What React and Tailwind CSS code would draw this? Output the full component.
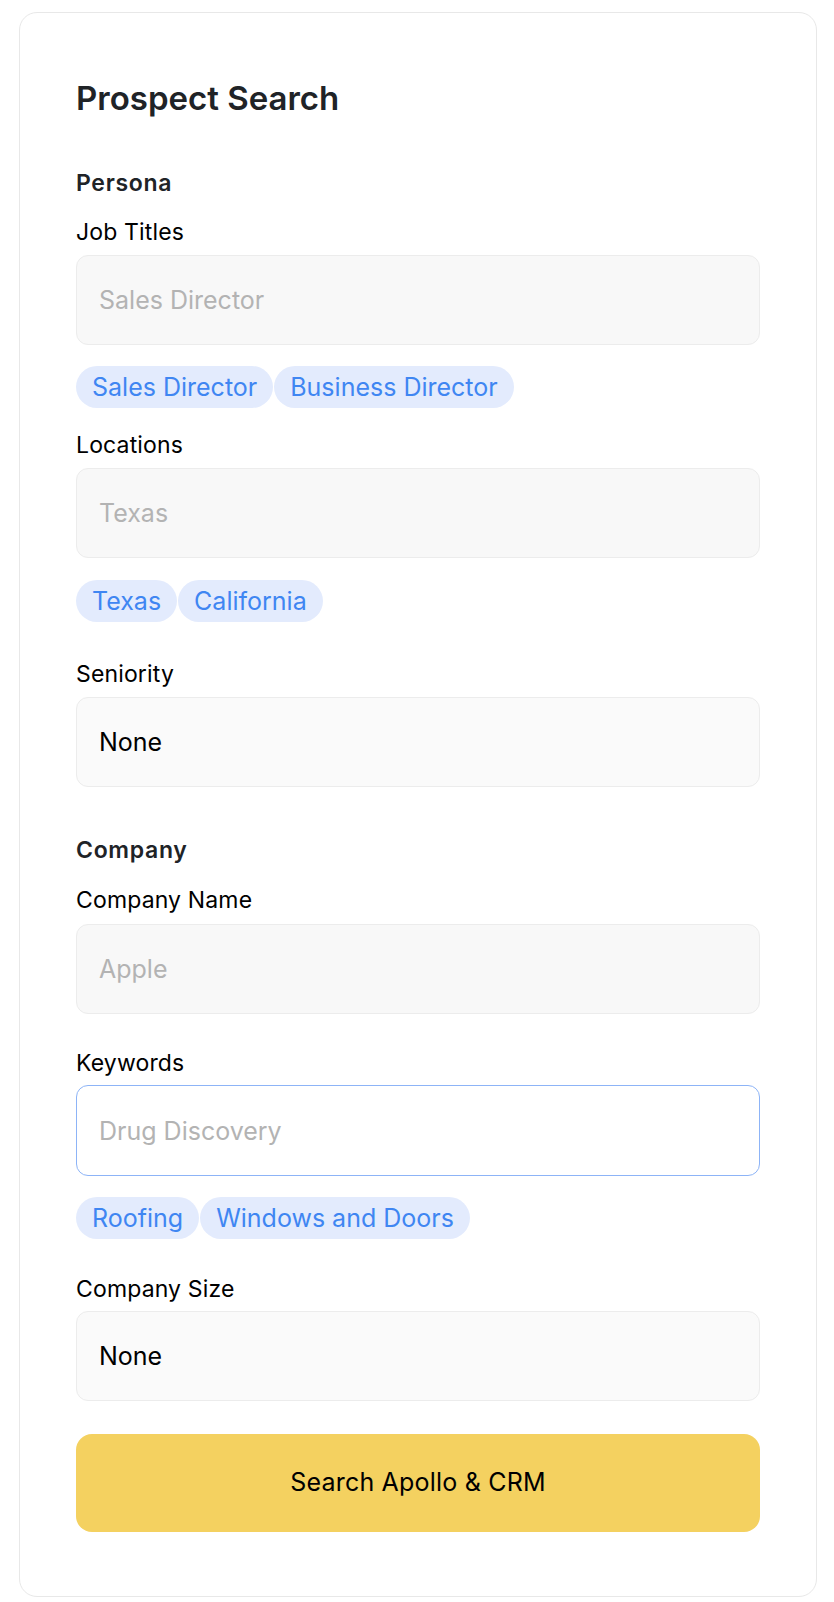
import { useState } from "react";

const font = { fontFamily: "Inter, 'Noto Sans', sans-serif" };

function Label({ children, className = "" }) {
  return <div className={`text-[23px] leading-[28px] text-black tracking-[0.15px] ${className}`}>{children}</div>;
}

function Field({ placeholder, value, focused, className = "" }) {
  return (
    <div
      className={`h-[90px] rounded-[12px] flex items-center px-[22px] text-[25px] leading-[30px] ${
        focused
          ? "bg-white border-[1.5px] border-[#8db4f7]"
          : value
          ? "bg-[#fafafa] border border-[#ececec]"
          : "bg-[#f8f8f8] border border-[#ececec]"
      } ${className}`}
    >
      {value ? <span className="text-black">{value}</span> : <span className="text-[#b3b3b3]">{placeholder}</span>}
    </div>
  );
}

function Chips({ items, className = "" }) {
  return (
    <div className={`flex gap-[1px] ${className}`}>
      {items.map((c) => (
        <span
          key={c}
          className="h-[42px] px-[16px] rounded-full bg-[#e3ebfd] text-[#3f86f2] text-[25px] leading-[30px] flex items-center"
        >
          {c}
        </span>
      ))}
    </div>
  );
}

export default function App() {
  const [jobTitles] = useState(["Sales Director", "Business Director"]);
  const [locations] = useState(["Texas", "California"]);
  const [keywords] = useState(["Roofing", "Windows and Doors"]);

  return (
    <div className="min-h-[1602px] bg-white pt-[12px]" style={font}>
      <div className="ml-[19px] w-[798px] border border-[#e8e8e8] rounded-[18px] bg-white px-[56px] pt-[65px] pb-[64px] flex flex-col">
        <h1 className="text-[33px] leading-[40px] font-semibold text-[#202327]">Prospect Search</h1>

        {/* Persona */}
        <div className="mt-[51px] text-[23px] leading-[28px] font-semibold text-[#202327] tracking-[0.7px]">Persona</div>
        <Label className="mt-[21px]">Job Titles</Label>
        <Field className="mt-[9px]" placeholder="Sales Director" />
        <Chips className="mt-[21px]" items={jobTitles} />

        <Label className="mt-[23px]">Locations</Label>
        <Field className="mt-[9px]" placeholder="Texas" />
        <Chips className="mt-[22px]" items={locations} />

        <Label className="mt-[38px]">Seniority</Label>
        <Field className="mt-[9px]" value="None" />

        {/* Company */}
        <div className="mt-[49px] text-[23px] leading-[28px] font-semibold text-[#202327] tracking-[0.7px]">Company</div>
        <Label className="mt-[22px]">Company Name</Label>
        <Field className="mt-[10px]" placeholder="Apple" />

        <Label className="mt-[35px]">Keywords</Label>
        <Field className="mt-[8px] h-[91px]" placeholder="Drug Discovery" focused />
        <Chips className="mt-[21px]" items={keywords} />

        <Label className="mt-[36px]">Company Size</Label>
        <Field className="mt-[8px]" value="None" />

        <button className="mt-[33px] h-[98px] rounded-[16px] bg-[#f4d160] text-[25px] font-normal text-black tracking-[0.2px]">
          Search Apollo &amp; CRM
        </button>
      </div>
    </div>
  );
}
